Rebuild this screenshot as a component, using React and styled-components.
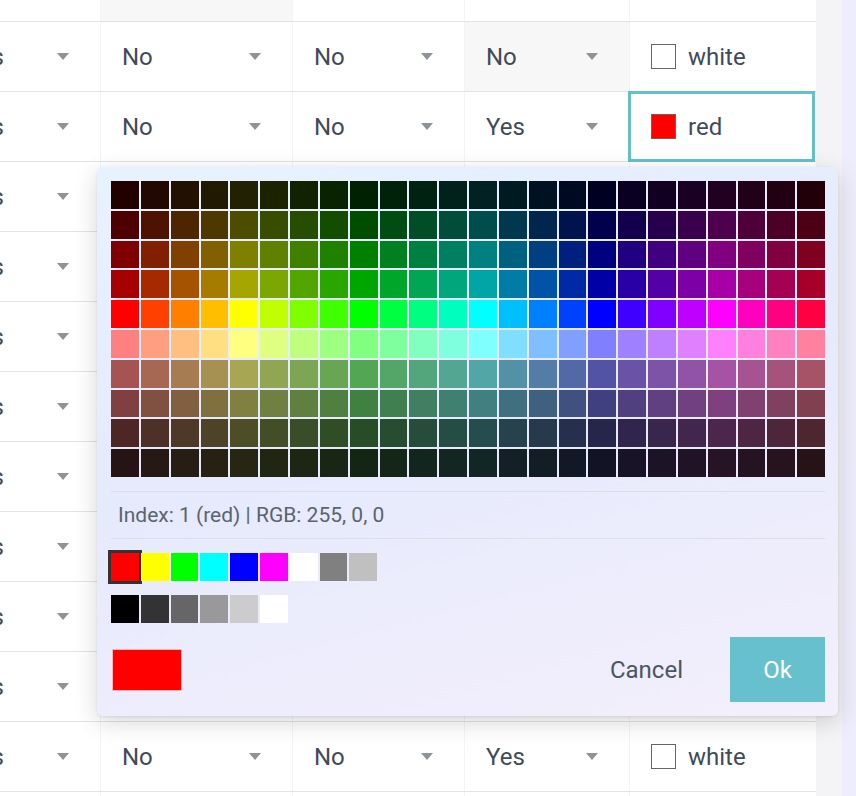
import React from 'react';
import styled, { createGlobalStyle } from 'styled-components';

const GlobalStyle = createGlobalStyle`
  html, body {
    margin: 0;
    padding: 0;
    overflow: hidden;
  }
  body {
    font-family: Roboto, 'Liberation Sans', sans-serif;
    background: #ededfb;
  }
`;

// hsv -> rgb string
const hsv = (h, s, v) => {
  const f = (n) => {
    const k = (n + h / 60) % 6;
    return v - v * s * Math.max(0, Math.min(k, 4 - k, 1));
  };
  return `rgb(${Math.round(f(5) * 255)}, ${Math.round(f(3) * 255)}, ${Math.round(f(1) * 255)})`;
};

const shades = [
  [1, 0.135],
  [1, 0.3],
  [1, 0.5],
  [1, 0.65],
  [1, 1],
  [0.5, 1],
  [0.5, 0.65],
  [0.5, 0.5],
  [0.5, 0.3],
  [0.5, 0.15],
];

const palette = shades.flatMap(([s, v]) =>
  Array.from({ length: 24 }, (_, i) => hsv(i * 15, s, v))
);

const basics = ['#ff0000', '#ffff00', '#00ff00', '#00ffff', '#0000ff', '#ff00ff', '#ffffff', '#808080', '#c0c0c0'];
const greys = ['#000000', '#333333', '#666666', '#999999', '#cccccc', '#ffffff'];

const rows = [
  { a: 'Yes', b: 'No', c: 'No', d: 'Yes', color: 'white', shade: 'b' },
  { a: 'Yes', b: 'No', c: 'No', d: 'No', color: 'white', shade: 'd' },
  { a: 'Yes', b: 'No', c: 'No', d: 'Yes', color: 'red', selected: true },
  ...Array.from({ length: 10 }, () => ({ a: 'Yes', b: 'No', c: 'No', d: 'Yes', color: 'white' })),
];

const App = () => {
  return (
    <Page>
      <GlobalStyle />
      <GridArea>
        <Table>
          {rows.map((row, i) => (
            <Row key={i}>
              {['a', 'b', 'c', 'd'].map((k) => (
                <SelectCell key={k} $shaded={row.shade === k}>
                  <span>{row[k]}</span>
                  <Caret />
                </SelectCell>
              ))}
              <ColorCell $selected={row.selected}>
                <Check $color={row.color} />
                <span>{row.color}</span>
              </ColorCell>
            </Row>
          ))}
        </Table>
      </GridArea>
      <Gutter />
      <Picker>
        <Palette>
          {palette.map((c, i) => (
            <Cell key={i} style={{ background: c }} />
          ))}
        </Palette>
        <Info>Index: 1 (red) | RGB: 255, 0, 0</Info>
        <Swatches>
          {basics.map((c, i) => (
            <Swatch key={c + i} $active={i === 0} style={{ background: c }} />
          ))}
        </Swatches>
        <Swatches>
          {greys.map((c) => (
            <Swatch key={c} style={{ background: c }} />
          ))}
        </Swatches>
        <Footer>
          <Preview />
          <Actions>
            <CancelButton>Cancel</CancelButton>
            <OkButton>Ok</OkButton>
          </Actions>
        </Footer>
      </Picker>
    </Page>
  );
};

export default App;

const Page = styled.div`
  position: relative;
  display: flex;
  width: 856px;
  height: 796px;
  overflow: hidden;
  background: #ededfb;
`;

const GridArea = styled.div`
  width: 816px;
  flex: none;
  overflow: hidden;
  background: #fff;
`;

const Gutter = styled.div`
  width: 26px;
  flex: none;
  background: #f4f4f6;
`;

const Table = styled.div`
  margin-left: -56px;
  margin-top: -48px;
`;

const Row = styled.div`
  display: grid;
  grid-template-columns: 157px 192px 172px 165px 186px;
  box-sizing: border-box;
  height: 70px;
  border-bottom: 1px solid #e3e3e3;
  font-size: 24px;
  color: #3f4b57;
`;

const SelectCell = styled.div`
  display: flex;
  align-items: center;
  justify-content: space-between;
  padding: 0 31px 0 21px;
  border-right: 1px solid #f4f4f4;
  background: ${(p) => (p.$shaded ? '#f7f7f7' : '#fff')};
`;

const Caret = styled.i`
  width: 0;
  height: 0;
  border-left: 6.5px solid transparent;
  border-right: 6.5px solid transparent;
  border-top: 7px solid #8e9398;
`;

const ColorCell = styled.div`
  position: relative;
  display: flex;
  align-items: center;
  gap: 12px;
  padding-left: 21px;
  &::after {
    content: '';
    display: ${(p) => (p.$selected ? 'block' : 'none')};
    position: absolute;
    top: -1px;
    bottom: -1px;
    left: -2px;
    right: 1px;
    border: 3px solid #66c0cb;
  }
`;

const Check = styled.span`
  width: 23px;
  height: 23px;
  border: 1px solid #666;
  background: ${(p) => (p.$color === 'red' ? '#ff0000' : '#fff')};
`;

const Picker = styled.div`
  position: absolute;
  left: 97px;
  top: 167px;
  width: 741px;
  height: 549px;
  box-sizing: border-box;
  padding: 14px 13px 14px 14px;
  border-radius: 6px;
  background: linear-gradient(165deg, #e7f2ff 0%, #e5eafc 45%, #f4effc 100%);
  box-shadow: 0 6px 24px rgba(0, 0, 0, 0.16), 0 1px 3px rgba(0, 0, 0, 0.08);
  display: flex;
  flex-direction: column;
`;

const Palette = styled.div`
  display: grid;
  grid-template-columns: repeat(24, 1fr);
  grid-auto-rows: 27.8px;
  gap: 2px;
  padding-bottom: 14px;
  border-bottom: 1px solid #dcdfe8;
`;

const Cell = styled.div``;

const Info = styled.div`
  height: 46px;
  display: flex;
  align-items: center;
  padding-left: 7px;
  font-size: 21px;
  color: #5a6470;
  border-bottom: 1px solid #dcdfe8;
  margin-bottom: 14px;
`;

const Swatches = styled.div`
  display: flex;
  gap: 2px;
  margin-bottom: 14px;
`;

const Swatch = styled.div`
  width: 27.8px;
  height: 28px;
  box-shadow: ${(p) => (p.$active ? '0 0 0 3px #333' : 'none')};
`;

const Footer = styled.div`
  margin-top: auto;
  display: flex;
  align-items: center;
  justify-content: space-between;
`;

const Preview = styled.div`
  width: 68px;
  height: 40px;
  margin-left: 1px;
  background: #ff0000;
  border: 1px solid rgba(255, 255, 255, 0.7);
`;

const Actions = styled.div`
  display: flex;
  align-items: center;
  gap: 23px;
`;

const CancelButton = styled.button`
  height: 65px;
  padding: 0 24px;
  border: none;
  background: transparent;
  font-family: Roboto, 'Liberation Sans', sans-serif;
  font-size: 24px;
  color: #4b5662;
`;

const OkButton = styled.button`
  width: 95px;
  height: 65px;
  border: none;
  background: #66c0cd;
  font-family: Roboto, 'Liberation Sans', sans-serif;
  font-size: 24px;
  color: #fff;
`;
